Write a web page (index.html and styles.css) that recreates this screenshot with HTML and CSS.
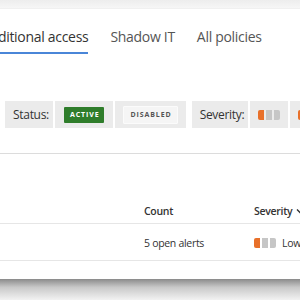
FILE: index.html
```html
<!DOCTYPE html>
<html lang="en">
<head>
    <meta charset="UTF-8">
    <meta name="viewport" content="width=device-width, initial-scale=1.0">
    <title>Policies</title>
    <link rel="stylesheet" href="styles.css">
</head>
<body>

    <div class="page">
        <div class="top-edge"></div>

        <!-- Tabs -->
        <nav class="tabs">
            <a class="tab active">Conditional access</a>
            <a class="tab">Shadow IT</a>
            <a class="tab">All policies</a>
        </nav>

        <!-- Filter bar -->
        <div class="filters">
            <div class="filter-group">
                <div class="cell label">Status:</div>
                <div class="cell"><span class="badge badge-active">Active</span></div>
                <div class="cell"><span class="badge badge-off">Disabled</span></div>
            </div>
            <div class="filter-group">
                <div class="cell label">Severity:</div>
                <div class="cell">
                    <span class="sev"><i class="on"></i><i></i><i></i></span>
                </div>
                <div class="cell">
                    <span class="sev"><i class="on"></i><i class="on"></i><i></i></span>
                </div>
            </div>
        </div>

        <div class="divider"></div>

        <!-- Table -->
        <div class="table">
            <div class="row head">
                <div class="col name"></div>
                <div class="col count">Count</div>
                <div class="col severity">
                    Severity
                    <svg class="chev" width="8" height="6" viewBox="0 0 8 6">
                        <path d="M1 1.5 L4 4.5 L7 1.5" fill="none" stroke="#333" stroke-width="1.4"/>
                    </svg>
                </div>
            </div>
            <div class="row">
                <div class="col name"></div>
                <div class="col count">5 open alerts</div>
                <div class="col severity">
                    <span class="sev"><i class="on"></i><i></i><i></i></span>
                    <span class="sev-text">Low</span>
                </div>
            </div>
        </div>

        <div class="bottom-edge"></div>
    </div>

</body>
</html>
```

FILE: styles.css
```css
/* Basic Reset */
* {
    margin: 0;
    padding: 0;
    box-sizing: border-box;
}

body {
    font-family: 'Open Sans', 'Noto Sans', sans-serif;
    background: #fff;
    color: #333;
    overflow: hidden;
}

.page {
    width: 300px;
    height: 300px;
    display: flex;
    flex-direction: column;
    overflow: hidden;
}

.top-edge {
    height: 9px;
    background: linear-gradient(#ededed, #f6f6f6);
    border-bottom: 1px solid #f0f0f0;
}

/* Tabs */
.tabs {
    display: flex;
    gap: 22px;
    margin-left: -27px;
    margin-top: 18px;
    white-space: nowrap;
}

.tab {
    font-size: 14px;
    letter-spacing: -0.3px;
    color: #555;
    padding-bottom: 6px;
    border-bottom: 2px solid transparent;
}

.tab.active {
    color: #333;
    border-bottom-color: #4a86d8;
}

/* Filter bar */
.filters {
    display: flex;
    gap: 6px;
    margin-top: 47px;
    margin-left: 5px;
    white-space: nowrap;
}

.filter-group {
    display: flex;
    gap: 2px;
}

.cell {
    height: 27px;
    background: #ebebeb;
    display: flex;
    align-items: center;
    padding: 0 8px;
}

.label {
    font-size: 12px;
    letter-spacing: -0.3px;
    color: #333;
    padding: 0 4px 0 8px;
}

.badge {
    display: inline-block;
    font-size: 7px;
    font-weight: 700;
    letter-spacing: 0.9px;
    text-transform: uppercase;
    line-height: 10px;
    padding: 3px 5px 3px 6px;
    border-radius: 1px;
}

.badge-active {
    background: #2f7d2b;
    color: #fff;
    margin: 0 1px;
}

.badge-off {
    background: #f5f5f5;
    color: #555;
    border: 1px solid #fbfbfb;
}

/* Severity bars */
.sev {
    display: inline-flex;
    gap: 2px;
}

.sev i {
    width: 6px;
    height: 10px;
    background: #c6c6c6;
}

.sev i:first-child {
    border-radius: 2px 0 0 2px;
}

.sev i:last-child {
    border-radius: 0 2px 2px 0;
}

.sev i.on {
    background: #e8702a;
}

.divider {
    margin-top: 25px;
    height: 1px;
    background: #dcdcdc;
}

/* Table */
.table {
    margin-top: 42px;
}

.row {
    display: flex;
    align-items: center;
    height: 37px;
    padding-top: 2px;
    border-bottom: 1px solid #e6e6e6;
    font-size: 10.5px;
    letter-spacing: -0.3px;
    white-space: nowrap;
}

.row.head {
    height: 28px;
    font-weight: 600;
    color: #333;
}

.col {
    flex-shrink: 0;
}

.col.name {
    width: 144px;
}

.col.count {
    width: 110px;
}

.col.severity {
    display: flex;
    align-items: center;
    gap: 6px;
}

.row.head .severity {
    gap: 4px;
}

.bottom-edge {
    margin-top: auto;
    height: 21px;
    background: linear-gradient(#8a8a8a, #c9c9c9 40%, #f2f2f2);
}
```
